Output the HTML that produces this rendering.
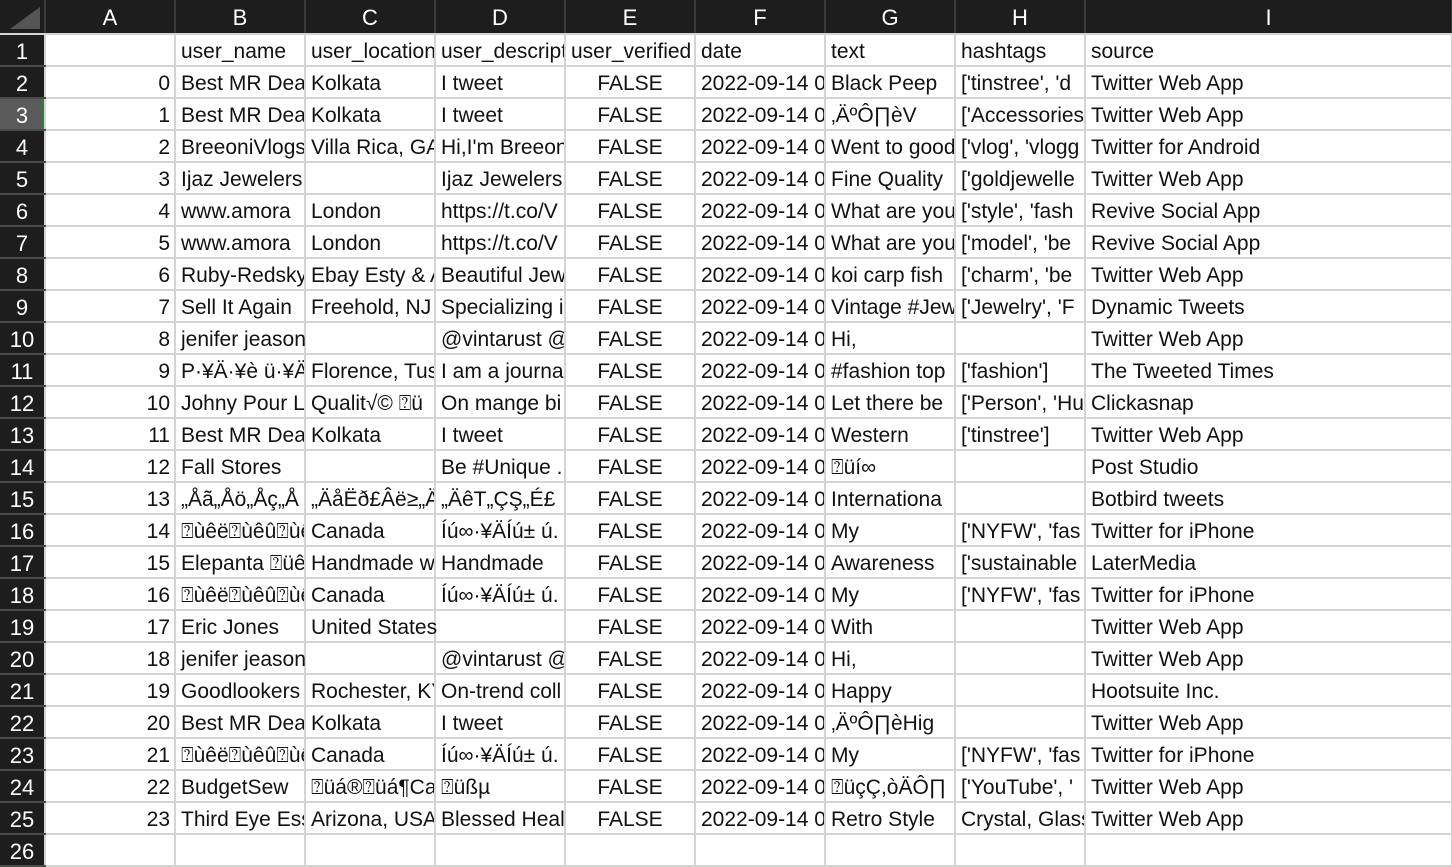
<!DOCTYPE html>
<html><head><meta charset="utf-8"><style>
body{margin:0;background:#fff;width:1452px;height:840px;overflow:hidden;font-family:"Liberation Sans","Noto Sans CJK SC",sans-serif;}
table{border-collapse:collapse;table-layout:fixed;position:absolute;left:0;top:0;width:1452px;}
td,th{height:32px;padding:4px 0 0 5px;border-right:2px solid #d4d4d4;border-bottom:2px solid #d4d4d4;font-size:21px;white-space:nowrap;overflow:hidden;color:#111;font-weight:normal;box-sizing:border-box;line-height:26px;}
thead th{height:34px;background:#1d1d1d;color:#fff;text-align:center;padding:2px 0 0 0;border-right:2px solid #3a3a3a;border-bottom:2px solid #d4d4d4;font-size:22px;}
tbody th{background:#1d1d1d;color:#fff;text-align:center;padding:4px 0 0 0;border-right:2px solid #d4d4d4;border-bottom:2px solid #4a4a4a;font-size:22px;}
tbody th.sel{background:#5a5a5a;box-shadow:inset -3px 0 0 #2f7d3c;}
td.n{text-align:right;padding-right:4px;}
td.c{text-align:center;padding-left:0;}
td.o{overflow:visible;position:relative;z-index:2;}
.corner{position:relative;}
.corner:after{content:"";position:absolute;right:4px;bottom:4px;border-left:30px solid transparent;border-bottom:22px solid #555;}
</style></head><body>
<table>
<colgroup><col style="width:45px"><col style="width:130px"><col style="width:130px"><col style="width:130px"><col style="width:130px"><col style="width:130px"><col style="width:130px"><col style="width:130px"><col style="width:130px"><col style="width:367px"></colgroup>
<thead><tr><th class="corner"></th><th>A</th><th>B</th><th>C</th><th>D</th><th>E</th><th>F</th><th>G</th><th>H</th><th>I</th></tr></thead>
<tbody>
<tr><th>1</th><td></td><td>user_name</td><td>user_location</td><td>user_description</td><td>user_verified</td><td>date</td><td>text</td><td>hashtags</td><td>source</td></tr>
<tr><th>2</th><td class="n">0</td><td>Best MR Deals</td><td>Kolkata</td><td>I tweet</td><td class="c">FALSE</td><td>2022-09-14 08</td><td>Black Peep</td><td>['tinstree', 'd</td><td>Twitter Web App</td></tr>
<tr><th class="sel">3</th><td class="n">1</td><td>Best MR Deals</td><td>Kolkata</td><td>I tweet</td><td class="c">FALSE</td><td>2022-09-14 08</td><td>‚ÄºÔ∏èV</td><td>['Accessories</td><td>Twitter Web App</td></tr>
<tr><th>4</th><td class="n">2</td><td>BreeoniVlogs</td><td>Villa Rica, GA</td><td>Hi,I'm Breeoni</td><td class="c">FALSE</td><td>2022-09-14 08</td><td>Went to good</td><td>['vlog', 'vlogg</td><td>Twitter for Android</td></tr>
<tr><th>5</th><td class="n">3</td><td>Ijaz Jewelers</td><td></td><td>Ijaz Jewelers</td><td class="c">FALSE</td><td>2022-09-14 08</td><td>Fine Quality</td><td>['goldjewelle</td><td>Twitter Web App</td></tr>
<tr><th>6</th><td class="n">4</td><td>www.amora</td><td>London</td><td>https://t.co/V</td><td class="c">FALSE</td><td>2022-09-14 08</td><td>What are you</td><td>['style', 'fash</td><td>Revive Social App</td></tr>
<tr><th>7</th><td class="n">5</td><td>www.amora</td><td>London</td><td>https://t.co/V</td><td class="c">FALSE</td><td>2022-09-14 08</td><td>What are you</td><td>['model', 'be</td><td>Revive Social App</td></tr>
<tr><th>8</th><td class="n">6</td><td>Ruby-Redsky</td><td>Ebay Esty &amp; A</td><td>Beautiful Jew</td><td class="c">FALSE</td><td>2022-09-14 08</td><td>koi carp fish</td><td>['charm', 'be</td><td>Twitter Web App</td></tr>
<tr><th>9</th><td class="n">7</td><td>Sell It Again</td><td>Freehold, NJ</td><td>Specializing in</td><td class="c">FALSE</td><td>2022-09-14 08</td><td>Vintage #Jew</td><td>['Jewelry', 'F</td><td>Dynamic Tweets</td></tr>
<tr><th>10</th><td class="n">8</td><td class="o">jenifer jeason</td><td></td><td>@vintarust @</td><td class="c">FALSE</td><td>2022-09-14 08</td><td>Hi,</td><td></td><td>Twitter Web App</td></tr>
<tr><th>11</th><td class="n">9</td><td>P·¥Ä·¥è ü·¥Ä</td><td>Florence, Tus</td><td>I am a journal</td><td class="c">FALSE</td><td>2022-09-14 08</td><td>#fashion top</td><td>['fashion']</td><td>The Tweeted Times</td></tr>
<tr><th>12</th><td class="n">10</td><td>Johny Pour La</td><td>Qualit√© ⍰ü</td><td>On mange bi</td><td class="c">FALSE</td><td>2022-09-14 08</td><td>Let there be</td><td>['Person', 'Hu</td><td>Clickasnap</td></tr>
<tr><th>13</th><td class="n">11</td><td>Best MR Deals</td><td>Kolkata</td><td>I tweet</td><td class="c">FALSE</td><td>2022-09-14 08</td><td>Western</td><td>['tinstree']</td><td>Twitter Web App</td></tr>
<tr><th>14</th><td class="n">12</td><td>Fall Stores</td><td></td><td>Be #Unique .</td><td class="c">FALSE</td><td>2022-09-14 08</td><td>⍰üí∞</td><td></td><td>Post Studio</td></tr>
<tr><th>15</th><td class="n">13</td><td>„Åã„Åö„Åç„Å</td><td>„ÄåËð£Âë≥„Ä</td><td>„ÄêT„ÇŞ„É£</td><td class="c">FALSE</td><td>2022-09-14 08</td><td>Internationa</td><td></td><td>Botbird tweets</td></tr>
<tr><th>16</th><td class="n">14</td><td>⍰ùêë⍰ùêû⍰ùê</td><td>Canada</td><td>Íú∞·¥ÄÍú± ú.</td><td class="c">FALSE</td><td>2022-09-14 08</td><td>My</td><td>['NYFW', 'fas</td><td>Twitter for iPhone</td></tr>
<tr><th>17</th><td class="n">15</td><td>Elepanta ⍰üê</td><td>Handmade with love in Th</td><td>Handmade</td><td class="c">FALSE</td><td>2022-09-14 08</td><td>Awareness</td><td>['sustainable</td><td>LaterMedia</td></tr>
<tr><th>18</th><td class="n">16</td><td>⍰ùêë⍰ùêû⍰ùê</td><td>Canada</td><td>Íú∞·¥ÄÍú± ú.</td><td class="c">FALSE</td><td>2022-09-14 08</td><td>My</td><td>['NYFW', 'fas</td><td>Twitter for iPhone</td></tr>
<tr><th>19</th><td class="n">17</td><td>Eric Jones</td><td class="o">United States</td><td></td><td class="c">FALSE</td><td>2022-09-14 08</td><td>With</td><td></td><td>Twitter Web App</td></tr>
<tr><th>20</th><td class="n">18</td><td class="o">jenifer jeason</td><td></td><td>@vintarust @</td><td class="c">FALSE</td><td>2022-09-14 08</td><td>Hi,</td><td></td><td>Twitter Web App</td></tr>
<tr><th>21</th><td class="n">19</td><td>Goodlookers</td><td>Rochester, KY</td><td>On-trend coll</td><td class="c">FALSE</td><td>2022-09-14 08</td><td>Happy</td><td></td><td>Hootsuite Inc.</td></tr>
<tr><th>22</th><td class="n">20</td><td>Best MR Deals</td><td>Kolkata</td><td>I tweet</td><td class="c">FALSE</td><td>2022-09-14 08</td><td>‚ÄºÔ∏èHig</td><td></td><td>Twitter Web App</td></tr>
<tr><th>23</th><td class="n">21</td><td>⍰ùêë⍰ùêû⍰ùê</td><td>Canada</td><td>Íú∞·¥ÄÍú± ú.</td><td class="c">FALSE</td><td>2022-09-14 08</td><td>My</td><td>['NYFW', 'fas</td><td>Twitter for iPhone</td></tr>
<tr><th>24</th><td class="n">22</td><td>BudgetSew</td><td>⍰üá®⍰üá¶Ca</td><td>⍰üßµ</td><td class="c">FALSE</td><td>2022-09-14 08</td><td>⍰üçÇ,òÄÔ∏</td><td>['YouTube', '</td><td>Twitter Web App</td></tr>
<tr><th>25</th><td class="n">23</td><td>Third Eye Ess</td><td>Arizona, USA</td><td>Blessed Heal</td><td class="c">FALSE</td><td>2022-09-14 08</td><td>Retro Style</td><td>Crystal, Glass,</td><td>Twitter Web App</td></tr>
<tr><th>26</th><td></td><td></td><td></td><td></td><td></td><td></td><td></td><td></td><td></td></tr>
</tbody></table>
</body></html>
